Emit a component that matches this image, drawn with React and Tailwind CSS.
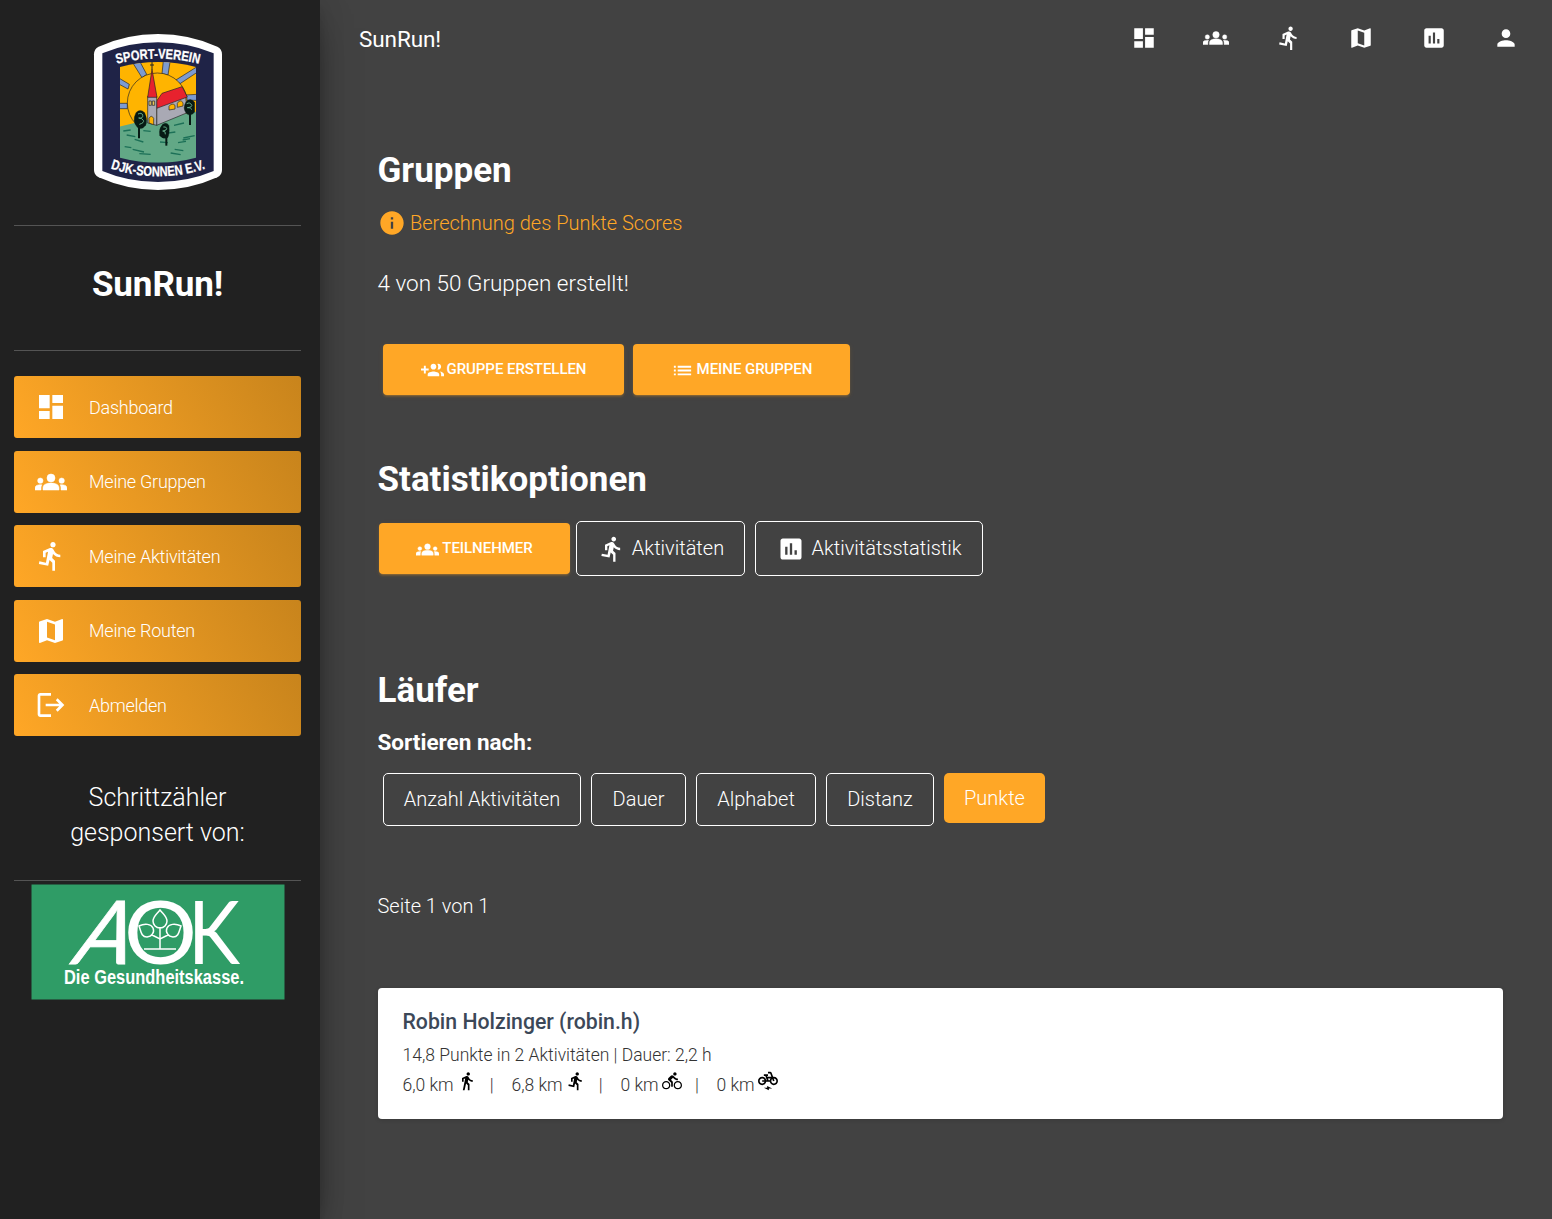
import React from "react";
import {
  MdDashboard,
  MdDirectionsRun,
  MdMap,
  MdLogout,
  MdPoll,
  MdPerson,
  MdInfo,
  MdList,
  MdDirectionsWalk,
  MdDirectionsBike,
  MdElectricBike,
} from "react-icons/md";

function GroupsIcon({ className }) {
  return (
    <svg className={className} viewBox="0 0 24 24" fill="currentColor" stroke="currentColor" strokeWidth="0.4">
      <circle cx="12" cy="9" r="3" />
      <circle cx="4" cy="11" r="2" />
      <circle cx="20" cy="11" r="2" />
      <path d="M12 12.750c1.630 0 3.070.39 4.240.9 1.080.48 1.760 1.560 1.760 2.730V18H6v-1.610c0-1.180.68-2.260 1.760-2.730 1.170-.52 2.610-.91 4.240-.91z" />
      <path d="M5.130 14.100C4.760 14.040 4.390 14 4 14c-.99 0-1.930.21-2.780.58C.48 14.900 0 15.620 0 16.430V18h4.500v-1.610c0-.83.23-1.610.63-2.290z" />
      <path d="M18.870 14.100c.37-.06.74-.1 1.130-.1.99 0 1.930.21 2.780.58.74.32 1.220 1.040 1.220 1.850V18h-4.500v-1.610c0-.83-.23-1.610-.63-2.290z" />
    </svg>
  );
}

function GroupAddIcon({ className }) {
  return (
    <svg className={className} viewBox="0 0 24 24" fill="currentColor">
      <path d="M8 10H5V7H3v3H0v2h3v3h2v-3h3v-2zm10 1c1.66 0 2.99-1.34 2.99-3S19.660 5 18 5c-.32 0-.63.05-.91.14.57.81.9 1.790.9 2.860s-.34 2.040-.9 2.860c.28.09.59.14.91.14zm-5 0c1.660 0 2.990-1.340 2.990-3S14.660 5 13 5c-1.660 0-3 1.340-3 3s1.340 3 3 3zm6.620 2.160c.83.73 1.380 1.660 1.380 2.840v2h3v-2c0-1.540-2.370-2.490-4.380-2.840zM13 13c-2 0-6 1-6 3v2h12v-2c0-2-4-3-6-3z" />
    </svg>
  );
}

function Crest() {
  return (
    <svg className="ml-[4px] h-[180px] w-[160px]" viewBox="0 0 480 540">
      <defs>
        <path id="top-arc" d="M98 132Q234 94 370 132" />
        <path id="bottom-arc" d="M84 440Q234 492 386 440" />
        <clipPath id="scene">
          <path d="M120 138Q234 108 348 138V410Q234 440 120 410Z" />
        </clipPath>
      </defs>
      <path d="M42 100Q42 84 56 77Q140 39 234 39Q328 39 412 77Q426 84 426 100V446Q426 462 412 469Q328 507 234 507Q140 507 56 469Q42 462 42 446Z" fill="#fff" />
      <path d="M67 97Q145 64 234 64Q323 64 401 97V450Q323 483 234 483Q145 483 67 450Z" fill="#1f2347" />
      <g clipPath="url(#scene)" stroke="#222" strokeWidth="2">
        <rect x="118" y="100" width="232" height="220" fill="#ffb400" />
        <g fill="#7d9bd0">
          <path d="M158 125L176 115L200 160L186 170Z" />
          <path d="M251 110H272L264 162L246 158Z" />
          <path d="M286 178L350 138V155L300 188Z" />
          <path d="M118 172L148 190L144 204L118 190Z" />
          <path d="M118 247H142V263H118Z" />
          <path d="M318 222L350 220V238H318Z" />
        </g>
        <circle cx="232" cy="246" r="90" fill="#ffb400" />
        <path d="M118 317L204 296L350 272V445H118Z" fill="#62a886" stroke="none" />
        <path d="M230 250L316 218L322 275L230 313Z" fill="#a9a9b4" />
        <path d="M230 240L246 217L306 197L322 228L230 262Z" fill="#e7222e" />
        <path d="M203 226H230V313L203 306Z" fill="#a9a9b4" />
        <path d="M216 145L231 229H203Z" fill="#e7222e" />
        <path d="M216 118V146M210 132H222" fill="none" strokeWidth="3" />
        <path d="M207 240H214V253H207ZM217 240H224V253H217Z" fill="#e8c65a" />
        <path d="M207 306V292Q214 280 221 292V311Z" fill="#ffb400" />
        <path d="M267 267V256Q276 244 285 253V264ZM292 259V247Q300 233 309 245V255Z" fill="#ffb400" />
      </g>
      <g fill="none" stroke="#1c7057" strokeWidth="4">
        <path d="M130 330l22-3m38 2l22 2m70-18l30-7m-60 32l34-5m-122 22l26 8m50 0l24 2m46-14l34-7" />
        <path d="M140 342l26 5m128 18l24-4m-160 24l34 8m92-8l26 4m-176-12l20 3m24 18l34 2m60-4l30 5m6-44l22-4" />
      </g>
      <g fill="#071a14" stroke="#071a14">
        <path d="M168 275Q180 262 194 275Q204 296 197 313Q185 329 172 319Q155 300 168 275Z" />
        <path d="M177 318V352" strokeWidth="6" />
        <path d="M248 310Q260 302 267 314Q269 340 263 350Q250 356 239 344Q235 324 248 310Z" />
        <path d="M259 345V374" strokeWidth="6" />
        <path d="M318 243Q331 228 344 244V273Q331 290 318 276Q307 261 318 243Z" />
        <path d="M330 277V312" strokeWidth="6" />
      </g>
      <path d="M174 279q12-6 14 4t-12 8q10 0 14 7t-12 12M250 318q8-2 10 4t-12 8q10 0 8 10M320 248q8-6 14 2t-12 10q10-2 14 6" fill="none" stroke="#62a886" strokeWidth="3" />
      <g fill="#fff" stroke="#fff" strokeWidth="0.8" fontFamily="Liberation Sans Narrow, Liberation Sans, sans-serif" fontWeight="700" fontSize="42">
        <text>
          <textPath href="#top-arc" startOffset="13" textLength="249" lengthAdjust="spacingAndGlyphs">SPORT-VEREIN</textPath>
        </text>
        <text>
          <textPath href="#bottom-arc" startOffset="8" textLength="290" lengthAdjust="spacingAndGlyphs">DJK-SONNEN E.V.</textPath>
        </text>
      </g>
    </svg>
  );
}

function AokLogo() {
  return (
    <svg className="h-[116px] w-[254px] overflow-visible" viewBox="0 0 254 116">
      <rect x="0.500" y="0.500" width="253" height="115" fill="#2f9c66" />
      <g fill="#fff" fontFamily="Lato, sans-serif" fontSize="88">
        <text transform="translate(38 79.500) skewX(-20.500)" textLength="56" lengthAdjust="spacingAndGlyphs" stroke="#fff" strokeWidth="0.800">A</text>
        <text x="93" y="79.500" textLength="73" lengthAdjust="spacingAndGlyphs">O</text>
        <text x="157" y="79.500" textLength="52" lengthAdjust="spacingAndGlyphs">K</text>
      </g>
      <g fill="none" stroke="#fff" strokeWidth="1.500">
        <path d="M129 26C125 31 122 33 122 37A7 7 0 0 0 136 37C136 33 133 31 129 26ZM129 43V65M113 65H145" />
        <path d="M108 42C114 39 120 40 122 44A7 6.500 0 0 1 116 53C110 53 110 47 108 42ZM150 42C144 39 138 40 136 44A7 6.500 0 0 0 142 53C148 53 148 47 150 42ZM121 51L129 55L137 51" />
      </g>
      <text x="33" y="99.500" fill="#fff" fontFamily="Liberation Sans, sans-serif" fontSize="19.500" fontWeight="700" textLength="180" lengthAdjust="spacingAndGlyphs">Die Gesundheitskasse.</text>
    </svg>
  );
}

const nav = [
  { icon: MdDashboard, label: "Dashboard" },
  { icon: GroupsIcon, label: "Meine Gruppen" },
  { icon: MdDirectionsRun, label: "Meine Aktivitäten" },
  { icon: MdMap, label: "Meine Routen" },
  { icon: MdLogout, label: "Abmelden" },
];

const topIcons = [MdDashboard, GroupsIcon, MdDirectionsRun, MdMap, MdPoll, MdPerson];

function Sidebar() {
  return (
    <aside className="z-10 h-full w-[320px] shrink-0 bg-[#212121] pl-[14px] pr-[19px] text-white shadow-[0_16px_38px_-12px_rgba(0,0,0,0.56),0_4px_25px_0_rgba(0,0,0,0.12),0_8px_10px_-5px_rgba(0,0,0,0.2)]">
      <div className="flex h-[226px] justify-center border-b border-[#545454] pt-[20.500px]">
        <Crest />
      </div>
      <div className="flex h-[125px] items-center justify-center border-b border-[#545454] pb-[6px]">
        <h1 className="text-[35px] font-bold tracking-[-0.1px]">SunRun!</h1>
      </div>
      <nav className="mt-[25px] flex flex-col gap-[12.500px]">
        {nav.map(({ icon: Icon, label }) => (
          <a key={label} className="flex h-[62px] items-center rounded-[3px] bg-[linear-gradient(60deg,#ffa726,#c8841c)] pl-[21px]">
            <Icon className="size-[32px]" />
            <span className="mt-px ml-[22px] text-[18px] leading-[30px] font-light tracking-[-0.25px]">{label}</span>
          </a>
        ))}
      </nav>
      <div className="mt-[44px] h-[101px] border-b border-[#545454] text-center text-[25px] leading-[35px] font-light">
        Schrittzähler
        <br />
        gesponsert von:
      </div>
      <div className="mt-[3px] flex justify-center">
        <AokLogo />
      </div>
    </aside>
  );
}

function SolidButton({ icon: Icon, className, children }) {
  return (
    <button className={`flex h-[51px] items-center justify-center rounded-[4px] bg-[#ffa726] pb-px text-[15px] font-medium tracking-[-0.05px] text-white uppercase shadow-[0_2px_2px_0_rgba(255,167,38,0.14),0_3px_1px_-2px_rgba(255,167,38,0.2),0_1px_5px_0_rgba(255,167,38,0.12)] ${className}`}>
      <Icon className="mt-[2px] mr-[3px] size-[23px]" />
      {children}
    </button>
  );
}

function OutlineButton({ icon: Icon, className, children }) {
  return (
    <button className={`flex items-center justify-center rounded-[5px] border border-white pb-px text-[20px] font-light text-white ${className}`}>
      {Icon && <Icon className="mt-px mr-[6px] ml-px size-[28px]" />}
      {children}
    </button>
  );
}

function RunnerCard() {
  return (
    <section className="mt-[67px] h-[131px] rounded-[4px] bg-white pt-[18px] pl-[24.500px] text-[17.500px] font-light text-[#333] shadow-[0_1px_4px_0_rgba(0,0,0,0.14)]">
      <h3 className="text-[21.250px] leading-[32px] font-medium text-[#3c4858]">Robin Holzinger (robin.h)</h3>
      <p className="mt-[2px] leading-[30px]">14,8 Punkte in 2 Aktivitäten | Dauer: 2,2 h</p>
      <div className="flex h-[30px] leading-[30px]">
        <span className="flex w-[109px]">
          6,0 km
          <MdDirectionsWalk className="mt-[1px] ml-[3px] size-5 text-black" />
          <span className="ml-[13px]">|</span>
        </span>
        <span className="flex w-[109px]">
          6,8 km
          <MdDirectionsRun className="mt-[1px] ml-[3px] size-5 text-black" />
          <span className="ml-[13px]">|</span>
        </span>
        <span className="flex w-[96px]">
          0 km
          <MdDirectionsBike className="mt-[1px] ml-[3.500px] size-5 text-black" />
          <span className="ml-[13px]">|</span>
        </span>
        <span className="flex">
          0 km
          <MdElectricBike className="mt-[1px] ml-[3.500px] size-5 text-black" />
        </span>
      </div>
    </section>
  );
}

export default function App() {
  return (
    <div className="flex h-[1219px] w-[1552px] overflow-hidden bg-[#424242] font-['Roboto',sans-serif] text-white">
      <Sidebar />
      <main className="flex-1">
        <header className="flex h-[77px] items-center justify-between pr-[33px] pl-[39px]">
          <span className="mt-[3px] text-[22.500px] tracking-[-0.1px]">SunRun!</span>
          <div className="flex gap-[46.500px] pb-px">
            {topIcons.map((Icon, i) => (
              <Icon key={i} className="size-[26px]" />
            ))}
          </div>
        </header>
        <div className="pr-[49px] pl-[58px]">
          <h2 className="mt-[69px] -ml-[0.500px] text-[35px] leading-[50px] font-bold">Gruppen</h2>
          <a className="mt-[12px] flex h-[30px] items-center text-[20px] font-light text-[#ffa726]">
            <MdInfo className="mr-[4px] size-[28px]" />
            Berechnung des Punkte Scores
          </a>
          <p className="mt-[28px] -ml-[0.500px] text-[22.500px] leading-[34px] font-light">4 von 50 Gruppen erstellt!</p>
          <div className="mt-[44px] flex gap-[9px] pl-[5px]">
            <SolidButton icon={GroupAddIcon} className="w-[241px]">Gruppe erstellen</SolidButton>
            <SolidButton icon={MdList} className="w-[217px]">Meine Gruppen</SolidButton>
          </div>
          <h2 className="mt-[60px] -ml-[0.500px] text-[35px] leading-[50px] font-bold">Statistikoptionen</h2>
          <div className="mt-[16px] flex h-[55px] items-center pl-px">
            <SolidButton icon={GroupsIcon} className="w-[191px]">Teilnehmer</SolidButton>
            <OutlineButton icon={MdDirectionsRun} className="ml-[6px] h-[55px] w-[169px]">Aktivitäten</OutlineButton>
            <OutlineButton icon={MdPoll} className="ml-[10px] h-[55px] w-[228px]">Aktivitätsstatistik</OutlineButton>
          </div>
          <h2 className="mt-[90px] -ml-[0.500px] text-[35px] leading-[50px] font-bold">Läufer</h2>
          <p className="mt-[10px] -ml-[0.500px] text-[22.500px] leading-[32px] font-bold">Sortieren nach:</p>
          <div className="mt-[15px] flex gap-[10px] pl-[5px]">
            <OutlineButton className="h-[53px] w-[198px]">Anzahl Aktivitäten</OutlineButton>
            <OutlineButton className="h-[53px] w-[95px]">Dauer</OutlineButton>
            <OutlineButton className="h-[53px] w-[120px]">Alphabet</OutlineButton>
            <OutlineButton className="h-[53px] w-[108px]">Distanz</OutlineButton>
            <button className="h-[50px] w-[101px] rounded-[5px] bg-[#ffa726] text-[20px] font-light text-white">Punkte</button>
          </div>
          <p className="mt-[65px] -ml-[0.500px] text-[20px] leading-[30px] font-light">Seite 1 von 1</p>
          <RunnerCard />
        </div>
      </main>
    </div>
  );
}
